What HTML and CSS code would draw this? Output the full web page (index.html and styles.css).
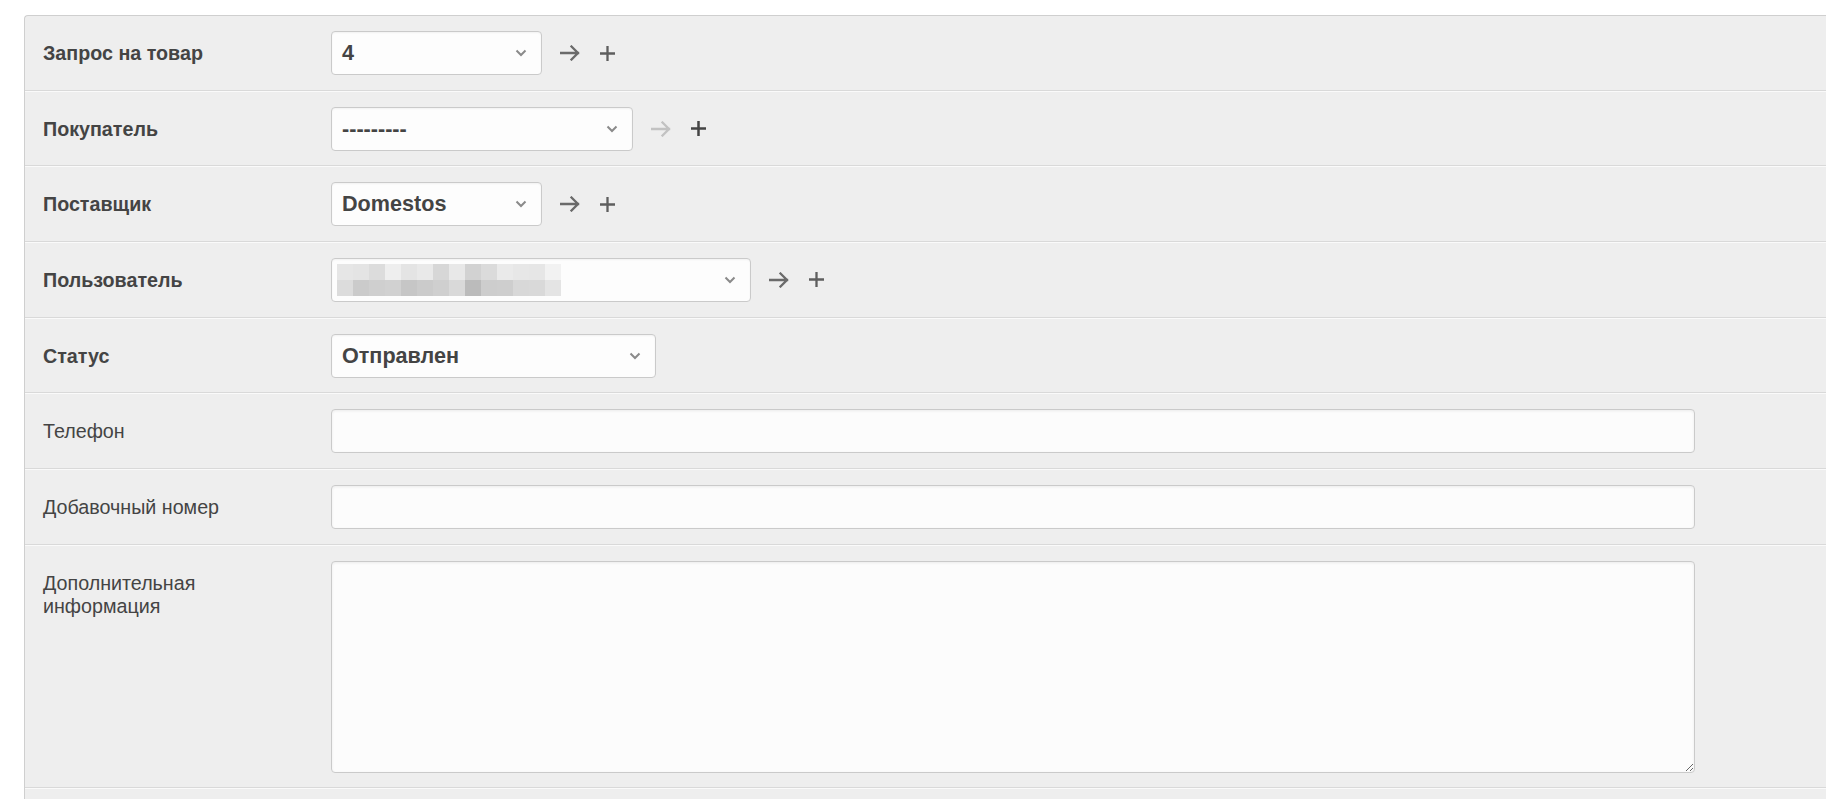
FILE: index.html
```html
<!DOCTYPE html>
<html lang="ru">
<head>
<meta charset="utf-8">
<title>Форма</title>
<link rel="stylesheet" href="styles.css">
</head>
<body>
<div class="form">
  <div class="row">
    <label class="lbl req">Запрос на товар</label>
    <div class="field">
      <div class="select w-request"><span class="val">4</span><svg class="chev" width="12" height="8" viewBox="0 0 12 8"><polyline points="1.5,1.5 6,6 10.5,1.5"/></svg></div>
      <span class="icon arrow"><svg width="20" height="16" viewBox="0 0 20 16"><path d="M1 8H18M11.5 1.5L18 8L11.5 14.5"/></svg></span>
      <span class="icon plus"><svg width="17" height="17" viewBox="0 0 17 17"><path d="M8.5 1V16M1 8.5H16"/></svg></span>
    </div>
  </div>
  <div class="row">
    <label class="lbl req">Покупатель</label>
    <div class="field">
      <div class="select w-buyer"><span class="val">---------</span><svg class="chev" width="12" height="8" viewBox="0 0 12 8"><polyline points="1.5,1.5 6,6 10.5,1.5"/></svg></div>
      <span class="icon arrow disabled"><svg width="20" height="16" viewBox="0 0 20 16"><path d="M1 8H18M11.5 1.5L18 8L11.5 14.5"/></svg></span>
      <span class="icon plus dark"><svg width="17" height="17" viewBox="0 0 17 17"><path d="M8.5 1V16M1 8.5H16"/></svg></span>
    </div>
  </div>
  <div class="row">
    <label class="lbl req">Поставщик</label>
    <div class="field">
      <div class="select w-supplier"><span class="val">Domestos</span><svg class="chev" width="12" height="8" viewBox="0 0 12 8"><polyline points="1.5,1.5 6,6 10.5,1.5"/></svg></div>
      <span class="icon arrow"><svg width="20" height="16" viewBox="0 0 20 16"><path d="M1 8H18M11.5 1.5L18 8L11.5 14.5"/></svg></span>
      <span class="icon plus"><svg width="17" height="17" viewBox="0 0 17 17"><path d="M8.5 1V16M1 8.5H16"/></svg></span>
    </div>
  </div>
  <div class="row">
    <label class="lbl req">Пользователь</label>
    <div class="field">
      <div class="select w-user user"><span class="blur"><span class="blur-top"></span><span class="blur-bottom"></span></span><svg class="chev" width="12" height="8" viewBox="0 0 12 8"><polyline points="1.5,1.5 6,6 10.5,1.5"/></svg></div>
      <span class="icon arrow"><svg width="20" height="16" viewBox="0 0 20 16"><path d="M1 8H18M11.5 1.5L18 8L11.5 14.5"/></svg></span>
      <span class="icon plus"><svg width="17" height="17" viewBox="0 0 17 17"><path d="M8.5 1V16M1 8.5H16"/></svg></span>
    </div>
  </div>
  <div class="row">
    <label class="lbl req">Статус</label>
    <div class="field">
      <div class="select w-status"><span class="val">Отправлен</span><svg class="chev" width="12" height="8" viewBox="0 0 12 8"><polyline points="1.5,1.5 6,6 10.5,1.5"/></svg></div>
    </div>
  </div>
  <div class="row">
    <label class="lbl">Телефон</label>
    <div class="field">
      <input class="text" type="text">
    </div>
  </div>
  <div class="row">
    <label class="lbl">Добавочный номер</label>
    <div class="field">
      <input class="text" type="text">
    </div>
  </div>
  <div class="row">
    <label class="lbl">Дополнительная информация</label>
    <div class="field">
      <textarea class="area"></textarea>
    </div>
  </div>
  <div class="row last"></div>
</div>
</body>
</html>
```
FILE: styles.css
```css
html, body {
  margin: 0;
  padding: 0;
  background: #fff;
  overflow: hidden;
}
body {
  font-family: "Liberation Sans", Arial, sans-serif;
  color: #444;
}
.form {
  margin: 15px 0 0 24px;
  background: #eeeeee;
  border: 1px solid #cfcfcf;
  border-right: 0;
  border-bottom: 0;
  border-radius: 4px 0 0 0;
}
.row {
  display: flex;
  align-items: flex-start;
  padding: 15px 0 14.67px;
  border-top: 1px solid #fafafa;
  border-bottom: 1px solid #d9d9d9;
}
.row:first-child {
  border-top: 0;
}
.row.last {
  height: 10px;
  padding: 0;
  border-bottom: 0;
}
.lbl {
  box-sizing: border-box;
  width: 306px;
  flex: none;
  padding: 11px 50px 0 18px;
  font-size: 19.7px;
  line-height: 23px;
  color: #444;
}
.lbl.req {
  font-weight: bold;
}
.field {
  display: flex;
  align-items: center;
}
.select {
  box-sizing: border-box;
  height: 44px;
  display: flex;
  align-items: center;
  justify-content: space-between;
  padding: 0 14px 0 10px;
  background: #fdfdfd;
  border: 1px solid #cacaca;
  border-radius: 4px;
  box-shadow: inset 0 1px 2px rgba(0,0,0,0.05);
}
.select .val {
  font-size: 21.6px;
  font-weight: bold;
  color: #444;
}
.select.user {
  padding-left: 5px;
}
.w-request, .w-supplier { width: 211px; }
.w-buyer { width: 302px; }
.w-user { width: 420px; }
.w-status { width: 325px; }
.chev polyline {
  fill: none;
  stroke: #8a8a8a;
  stroke-width: 2;
}
.blur {
  display: flex;
  flex-direction: column;
  width: 224px;
}
.blur-top, .blur-bottom {
  display: block;
  height: 16px;
}
.blur-top {
  background: linear-gradient(to right,
    #e6e6e6 0 16px, #e4e4e4 16px 32px, #dcdcdc 32px 48px, #eeeeee 48px 64px,
    #e4e4e4 64px 80px, #e9e9e9 80px 96px, #d7d7d7 96px 112px, #e8e8e8 112px 128px,
    #d2d2d2 128px 144px, #dbdbdb 144px 160px, #eaeaea 160px 176px, #e7e7e7 176px 192px,
    #e6e6e6 192px 208px, #f2f2f2 208px 224px);
}
.blur-bottom {
  background: linear-gradient(to right,
    #dcdcdc 0 16px, #cbcbcb 16px 32px, #cfcfcf 32px 48px, #d1d1d1 48px 64px,
    #c6c6c6 64px 80px, #cbcbcb 80px 96px, #cfcfcf 96px 112px, #d9d9d9 112px 128px,
    #bbbbbb 128px 144px, #cdcdcd 144px 160px, #cecece 160px 176px, #d8d8d8 176px 192px,
    #d9d9d9 192px 208px, #e4e4e4 208px 224px);
}
.icon {
  display: flex;
  align-items: center;
}
.icon svg path {
  fill: none;
  stroke-linecap: square;
}
.arrow {
  margin-left: 18px;
}
.arrow svg path {
  stroke: #6a6a6a;
  stroke-width: 2.3;
}
.arrow.disabled svg path {
  stroke: #c2c2c2;
}
.plus {
  margin-left: 19px;
}
.plus svg path {
  stroke: #5e5e5e;
  stroke-width: 2.3;
  stroke-linecap: butt;
}
.plus.dark svg path {
  stroke: #444;
  stroke-width: 2.5;
}
.text, .area {
  box-sizing: border-box;
  width: 1364px;
  margin: 0;
  background: #fcfcfc;
  border: 1px solid #cacaca;
  border-radius: 4px;
  box-shadow: inset 0 1px 3px rgba(0,0,0,0.07);
  font-family: "Liberation Sans", Arial, sans-serif;
  font-size: 19px;
  outline: none;
}
.text {
  height: 44px;
  padding: 0 10px;
}
.area {
  height: 212px;
  padding: 8px 10px;
  resize: both;
  display: block;
}
```
